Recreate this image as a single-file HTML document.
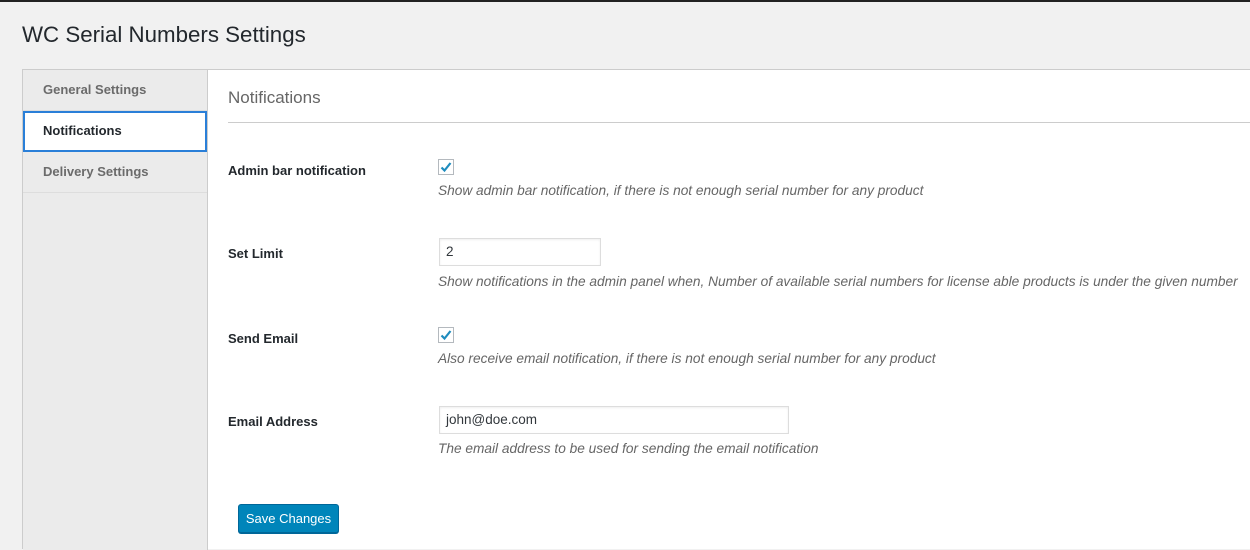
<!DOCTYPE html>
<html><head><style>
*{margin:0;padding:0;box-sizing:border-box}
body{width:1250px;height:549px;overflow:hidden;background:#f1f1f1;font-family:"Liberation Sans",sans-serif;color:#23282d;position:relative}
.top{position:absolute;left:0;top:0;width:1250px;height:2px;background:#222}
h1{position:absolute;left:22px;top:22px;font-size:22.3px;font-weight:400;color:#23282d}
.panel{position:absolute;left:22px;top:69px;width:1228px;height:480px;border-top:1px solid #ccc;border-left:1px solid #ccc;background:#fff}
.side{position:absolute;left:0;top:0;width:185px;height:480px;background:#ebebeb;border-right:1px solid #ccc}
.nav{height:41px;line-height:40px;padding-left:20px;font-size:13px;font-weight:bold;color:#6b6b6b;border-bottom:1px solid #ddd}
.nav.act{background:#fff;color:#23282d;border:2px solid #2a7fd8;padding-left:18px;line-height:36px;height:41px}
.a{position:absolute;font-size:13px;white-space:nowrap}
.lbl{font-weight:bold;color:#23282d}
.d{font-style:italic;color:#666;font-size:13.7px}
.inp{position:absolute;border:1px solid #ddd;background:#fff;font-size:13.5px;padding-left:6px;line-height:26px;height:28px;color:#32373c;box-shadow:inset 0 1px 2px rgba(0,0,0,.07)}
.cb{position:absolute;width:16px;height:16px;border:1px solid #b4b9be;background:#fff}
.btn{position:absolute;left:238px;top:504px;width:101px;height:29px;background:#0085ba;border:1px solid #006799;border-radius:3px;color:#fff;font-size:13px;text-align:center;line-height:27px;box-shadow:0 1px 0 #006799}
</style></head><body>
<div class="top"></div>
<h1>WC Serial Numbers Settings</h1>
<div class="panel">
<div class="side">
<div class="nav">General Settings</div>
<div class="nav act">Notifications</div>
<div class="nav">Delivery Settings</div>
</div>
</div>
<div class="a" style="left:228px;top:88px;font-size:17px;color:#666;font-weight:300">Notifications</div>
<div style="position:absolute;left:228px;top:122px;width:1022px;height:1px;background:#ccc"></div>
<div class="a lbl" style="left:228px;top:163px">Admin bar notification</div>
<div class="cb" style="left:438px;top:159px"><svg width="14" height="14" viewBox="0 0 14 14"><path d="M2.5 7.5l3 3 6-7.5" stroke="#1e8cbe" stroke-width="2.2" fill="none"/></svg></div>
<div class="a d" style="left:438px;top:183px">Show admin bar notification, if there is not enough serial number for any product</div>
<div class="a lbl" style="left:228px;top:246px">Set Limit</div>
<div class="inp" style="left:439px;top:238px;width:162px">2</div>
<div class="a d" style="left:438px;top:274px">Show notifications in the admin panel when, Number of available serial numbers for license able products is under the given number</div>
<div class="a lbl" style="left:228px;top:331px">Send Email</div>
<div class="cb" style="left:438px;top:327px"><svg width="14" height="14" viewBox="0 0 14 14"><path d="M2.5 7.5l3 3 6-7.5" stroke="#1e8cbe" stroke-width="2.2" fill="none"/></svg></div>
<div class="a d" style="left:438px;top:351px">Also receive email notification, if there is not enough serial number for any product</div>
<div class="a lbl" style="left:228px;top:414px">Email Address</div>
<div class="inp" style="left:439px;top:406px;width:350px">john@doe.com</div>
<div class="a d" style="left:438px;top:441px">The email address to be used for sending the email notification</div>
<div class="btn">Save Changes</div>
</body></html>
